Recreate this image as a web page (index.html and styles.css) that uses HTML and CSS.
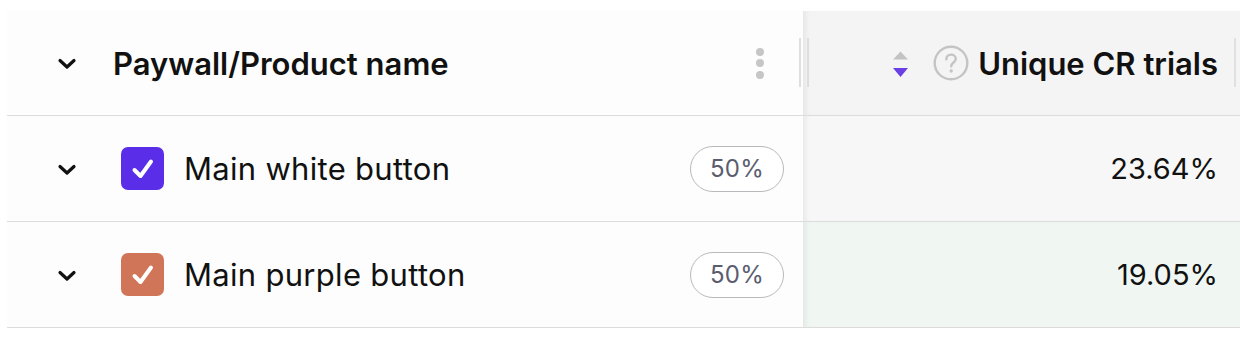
FILE: index.html
```html
<!DOCTYPE html>
<html lang="en">
<head>
<meta charset="utf-8">
<title>Paywall table</title>
<link rel="stylesheet" href="styles.css">
</head>
<body>
<div class="table">
  <div class="row head">
    <div class="cell left">
      <svg class="chev" viewBox="0 0 20 12" width="20" height="12"><path d="M3 2.5 L10 9 L17 2.5" fill="none" stroke="#111" stroke-width="3.2" stroke-linecap="round" stroke-linejoin="round"/></svg>
      <span class="title">Paywall/Product name</span>
      <span class="kebab"><i></i><i></i><i></i></span>
      <span class="handle"></span>
    </div>
    <div class="cell right">
      <svg class="sort" viewBox="0 0 17 27" width="17" height="27"><path d="M8.5 0.5 L16 8.5 L1 8.5 Z" fill="#c3c3c3"/><path d="M1 17 L16 17 L8.5 26 Z" fill="#6a3fe4"/></svg>
      <svg class="help" viewBox="0 0 36 36" width="36" height="36"><circle cx="18" cy="18" r="16.3" fill="none" stroke="#c4c4c4" stroke-width="2.4"/><path d="M13.3 14.3 C13.3 11.2 15.4 9.6 18 9.6 C20.8 9.6 22.8 11.3 22.8 13.9 C22.8 17.4 18.2 17.6 18.2 21.2" fill="none" stroke="#c4c4c4" stroke-width="2.4" stroke-linecap="round"/><circle cx="18.2" cy="26" r="1.7" fill="#c4c4c4"/></svg>
      <span class="title">Unique CR trials</span>
      <span class="handle-r"></span>
    </div>
  </div>
  <div class="row">
    <div class="cell left">
      <svg class="chev" viewBox="0 0 20 12" width="20" height="12"><path d="M3 2.5 L10 9 L17 2.5" fill="none" stroke="#111" stroke-width="3.2" stroke-linecap="round" stroke-linejoin="round"/></svg>
      <span class="check purple"><svg viewBox="0 0 24 24" width="24" height="24"><path d="M3.5 13 L9.5 19 L20 4.5" fill="none" stroke="#fff" stroke-width="4" stroke-linecap="round" stroke-linejoin="round"/></svg></span>
      <span class="name">Main white button</span>
      <span class="pill">50%</span>
    </div>
    <div class="cell right val">23.64%</div>
  </div>
  <div class="row">
    <div class="cell left">
      <svg class="chev" viewBox="0 0 20 12" width="20" height="12"><path d="M3 2.5 L10 9 L17 2.5" fill="none" stroke="#111" stroke-width="3.2" stroke-linecap="round" stroke-linejoin="round"/></svg>
      <span class="check orange"><svg viewBox="0 0 24 24" width="24" height="24"><path d="M3.5 13 L9.5 19 L20 4.5" fill="none" stroke="#fff" stroke-width="4" stroke-linecap="round" stroke-linejoin="round"/></svg></span>
      <span class="name">Main purple button</span>
      <span class="pill">50%</span>
    </div>
    <div class="cell right val green">19.05%</div>
  </div>
</div>
</body>
</html>
```

FILE: styles.css
```css
html, body {
  margin: 0;
  padding: 0;
  background: #ffffff;
}
body {
  font-family: Inter, "Noto Sans", sans-serif;
  color: #111;
}
.table {
  margin-left: 7px;
  padding-top: 11px;
  width: 1233px;
}
.row {
  display: grid;
  grid-template-columns: 796px 1fr;
  height: 105px;
  border-bottom: 1px solid #dcdcdc;
}
.row.head {
  height: 104px;
}
.cell {
  display: flex;
  align-items: center;
}
.cell.left {
  position: relative;
  padding-left: 50px;
  padding-right: 19px;
  background: #fdfdfd;
}
.cell.right {
  position: relative;
  justify-content: flex-end;
  padding-right: 22px;
  background: #f7f7f7;
  box-shadow: inset 6px 0 6px -4px rgba(0,0,0,0.07);
}
.head .cell.right {
  background: #f4f4f4;
}
.cell.right.green {
  background: #f0f7f2;
}
.chev {
  flex: none;
  margin-top: 2px;
}
.head .title {
  font-weight: 600;
  font-size: 31px;
  letter-spacing: 0;
  color: #111;
}
.head .left .title {
  margin-left: 36px;
}
.kebab {
  margin-left: auto;
  margin-right: 20px;
  display: flex;
  flex-direction: column;
  gap: 3.5px;
}
.kebab i {
  display: block;
  width: 8px;
  height: 8px;
  border-radius: 50%;
  background: #c6c6c6;
}
.handle {
  position: absolute;
  z-index: 2;
  right: -6px;
  top: 27px;
  width: 6px;
  height: 49px;
  border-left: 2px solid #dedede;
  border-right: 2px solid #dedede;
}
.handle-r {
  position: absolute;
  right: 4px;
  top: 27px;
  width: 2px;
  height: 49px;
  background: #e0e0e0;
}
.sort {
  margin-right: 24px;
  margin-top: 2px;
}
.help {
  margin-right: 9px;
}
.check {
  flex: none;
  width: 43px;
  height: 43px;
  border-radius: 7px;
  margin-left: 44px;
  display: flex;
  align-items: center;
  justify-content: center;
}
.check.purple { background: #5a2ee9; }
.check.orange { background: #d07557; }
.name {
  margin-left: 20px;
  font-size: 31px;
  letter-spacing: 0.3px;
  color: #111;
}
.pill {
  margin-left: auto;
  height: 46px;
  width: 94px;
  box-sizing: border-box;
  border: 1.5px solid #b9b9bd;
  border-radius: 23px;
  display: flex;
  align-items: center;
  justify-content: center;
  font-size: 24px;
  letter-spacing: 0.3px;
  color: #5a5d6e;
  background: #fff;
}
.val {
  font-size: 29px;
  color: #111;
}
```
